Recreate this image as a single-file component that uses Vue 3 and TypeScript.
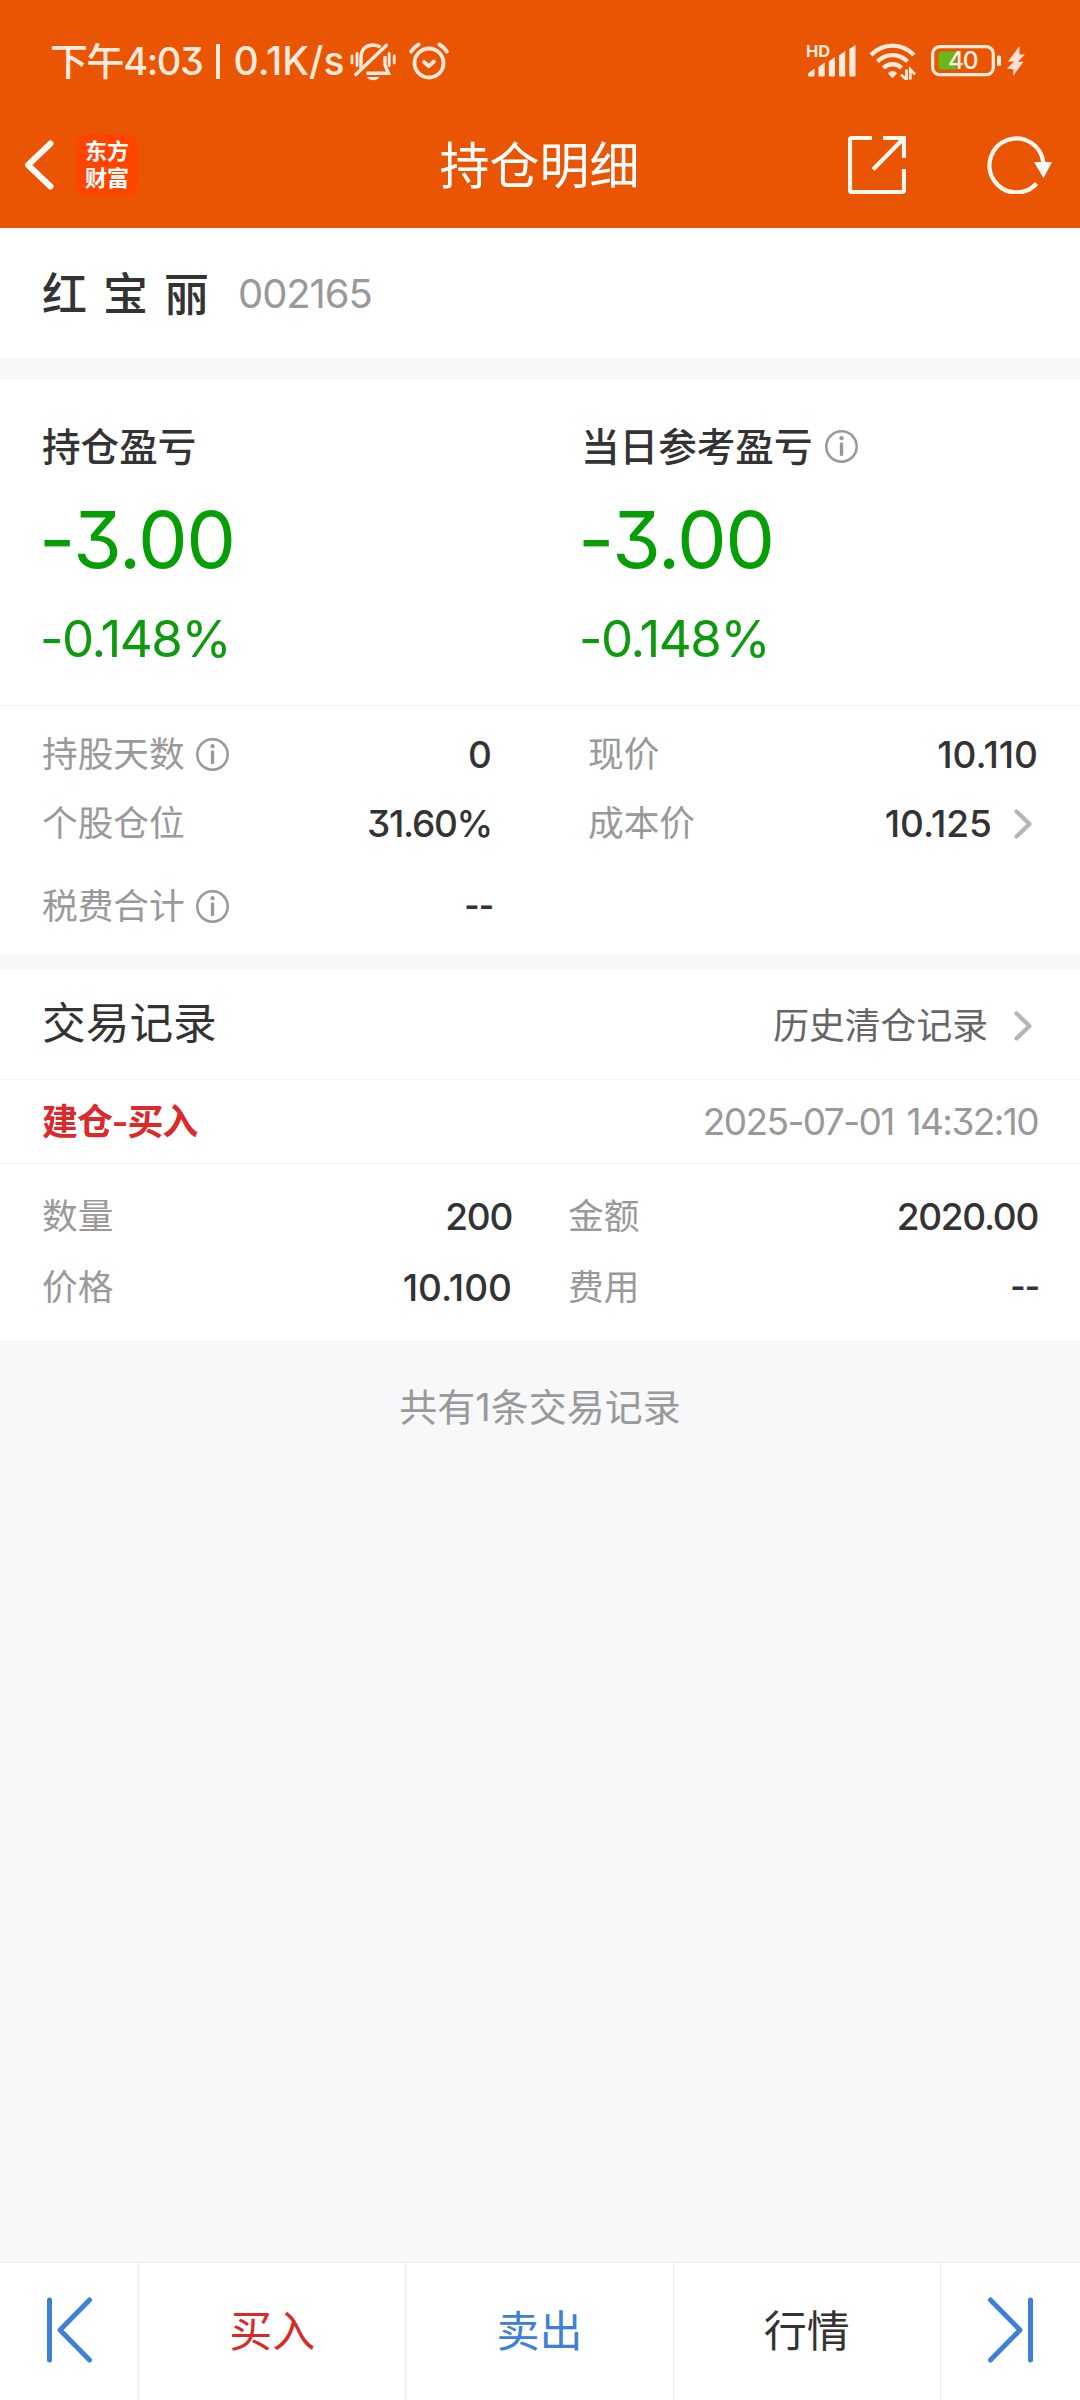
<script setup lang="ts">
interface Profit {
  label: string
  amount: string
  rate: string
  info: boolean
}

interface Field {
  label: string
  value: string
  info?: boolean
  link?: boolean
  tight?: boolean
}

const profits: Profit[] = [
  { label: '持仓盈亏', amount: '-3.00', rate: '-0.148%', info: false },
  { label: '当日参考盈亏', amount: '-3.00', rate: '-0.148%', info: true },
]

const leftFields: Field[] = [
  { label: '持股天数', value: '0', info: true },
  { label: '个股仓位', value: '31.60%', tight: true },
  { label: '税费合计', value: '--', info: true },
]

const rightFields: Field[] = [
  { label: '现价', value: '10.110' },
  { label: '成本价', value: '10.125', link: true },
]

const tradeLeft: Field[] = [
  { label: '数量', value: '200', tight: true },
  { label: '价格', value: '10.100' },
]

const tradeRight: Field[] = [
  { label: '金额', value: '2020.00', tight: true },
  { label: '费用', value: '--' },
]
</script>

<template>
  <div class="page">
    <header class="header">
      <div class="status">
        <div class="status-left">
          <span class="clock">下午4:03</span>
          <span class="bar"></span>
          <span class="speed">0.1K/s</span>
          <svg class="bell" width="46" height="40" viewBox="0 0 46 40" fill="none" stroke="#ffeadb" stroke-width="3.4">
            <path d="M11 27.500V16.500C11 8.500 16 4 23 4C26 4 28.500 4.800 30.500 6.200" />
            <path d="M35 15V24L38.500 32.300H16.500" />
            <path d="M5.800 33.500L36.500 4.300" stroke-linecap="round" />
            <path d="M2 15V22M7 12.500V24.500M39.200 12.500V24.500M44.200 15V22" stroke-width="2.800" stroke-linecap="round" />
            <path d="M17 36H29.500C28 38.300 26 39.300 23.200 39.300C20.500 39.300 18.500 38.300 17 36Z" fill="#ffeadb" stroke="none" />
          </svg>
          <svg class="alarm" width="40" height="38" viewBox="0 0 40 38" fill="none" stroke="#ffeadb" stroke-width="3.800" stroke-linecap="round" stroke-linejoin="round">
            <circle cx="20" cy="21" r="14.500" />
            <path d="M2.200 9.500C4 6.500 6.400 4.300 9.600 2.500M37.800 9.500C36 6.500 33.600 4.300 30.400 2.500" />
            <path d="M15 20L19.600 24.200L25 19.500" />
          </svg>
        </div>
        <div class="status-right">
          <div class="signal">
            <span class="hd">HD</span>
            <svg width="50" height="36" viewBox="0 0 50 36" fill="#ffeadb">
              <path d="M1 30.500L7.500 25.500V32.500Q7.500 33.500 6.500 33.500H2Q1 33.500 1 32.500Z" />
              <path d="M11.500 24L17.700 19.500V32.500Q17.700 33.500 16.700 33.500H12.500Q11.500 33.500 11.500 32.500Z" />
              <path d="M21.800 18.500L28 14V32.500Q28 33.500 27 33.500H22.800Q21.800 33.500 21.800 32.500Z" />
              <path d="M32 12.500L38.200 8V32.500Q38.200 33.500 37.200 33.500H33Q32 33.500 32 32.500Z" />
              <path d="M42.300 6L48.500 2V32.500Q48.500 33.500 47.500 33.500H43.300Q42.300 33.500 42.300 32.500Z" />
            </svg>
          </div>
          <svg class="wifi" width="48" height="38" viewBox="0 0 48 38" fill="none" stroke="#ffeadb" stroke-width="4.400">
            <path d="M2 13C14.500 0.500 32.500 0.500 45 13" />
            <path d="M8.500 19.500C17 11 30 11 38.500 19.500" />
            <path d="M14.500 26C19.500 20.900 27.500 20.900 32.500 26" />
            <path d="M18.800 31.200Q23.500 27 28.200 31.200L23.500 36.200Z" fill="#ffeadb" stroke="none" />
            <path d="M37.500 27.500V37.500L32 32.800M41.300 37.500V27.500L46 32.400" stroke-width="2.800" />
          </svg>
          <svg class="battery" width="72" height="32" viewBox="0 0 72 32">
            <rect x="1.700" y="1.700" width="60.600" height="28" rx="7" fill="none" stroke="#ffeadb" stroke-width="3.200" />
            <rect x="66" y="10.500" width="4" height="10.500" rx="1.500" fill="#ffeadb" />
            <path d="M10 6.500H25V24.500H10Q7.500 24.500 7.500 22V9Q7.500 6.500 10 6.500Z" fill="#68b81a" />
            <text x="31.500" y="24.400" text-anchor="middle" class="level">40</text>
          </svg>
          <svg class="bolt" width="18" height="32" viewBox="0 0 18 32" fill="#ffe0d2">
            <path d="M12.500 1L1 16.500H7L0 23.500L6.500 24.500L6 31L16.500 16.800H11L18 9.500H12.500Z" />
          </svg>
        </div>
      </div>

      <div class="nav">
        <div class="nav-side">
          <svg width="30" height="50" viewBox="0 0 30 50" fill="none" stroke="#fffaf5" stroke-width="6" stroke-linecap="round" stroke-linejoin="round">
            <path d="M26.500 3.500L4 25L26.500 46.500" />
          </svg>
          <div class="logo"><span>东方</span><span>财富</span></div>
        </div>
        <h1 class="nav-title">持仓明细</h1>
        <div class="nav-side nav-end">
          <svg class="share" width="58" height="58" viewBox="0 0 58 58" fill="none" stroke="#fff6ee" stroke-width="4.200">
            <path d="M24 2H4Q2 2 2 4V54Q2 56 4 56H54Q56 56 56 54V33" />
            <path d="M35 2H56V22M55.500 2.500L25 33.500" />
          </svg>
          <svg class="reload" width="66" height="58" viewBox="0 0 66 58" fill="none" stroke="#fff6ee" stroke-width="4.200">
            <path d="M49.600 47.500A27 27 0 1 1 56.400 27" />
            <path d="M47 26H65L56.500 42Z" fill="#fff" stroke="none" />
          </svg>
        </div>
      </div>
    </header>

    <section class="stock">
      <span class="stock-name">红 宝 丽</span>
      <span class="stock-code">002165</span>
    </section>

    <section class="card holding">
      <div class="profits">
        <div v-for="p in profits" :key="p.label" class="profit">
          <div class="profit-label">
            <span>{{ p.label }}</span>
            <svg v-if="p.info" class="info" width="33" height="33" viewBox="0 0 33 33" fill="none" stroke="#999">
              <circle cx="16.500" cy="16.500" r="15.200" stroke-width="2.500" />
              <circle cx="16.500" cy="8.200" r="2.100" fill="#999" stroke="none" />
              <path d="M16.500 14V24.500" stroke-width="3.400" stroke-linecap="round" />
            </svg>
          </div>
          <div class="profit-amount">{{ p.amount }}</div>
          <div class="profit-rate">{{ p.rate }}</div>
        </div>
      </div>
      <div class="fields">
        <div v-for="(col, i) in [leftFields, rightFields]" :key="i" class="field-col">
          <div v-for="f in col" :key="f.label" class="field">
            <span class="field-label">{{ f.label }}</span>
            <svg v-if="f.info" class="info" width="33" height="33" viewBox="0 0 33 33" fill="none" stroke="#999">
              <circle cx="16.500" cy="16.500" r="15.200" stroke-width="2.500" />
              <circle cx="16.500" cy="8.200" r="2.100" fill="#999" stroke="none" />
              <path d="M16.500 14V24.500" stroke-width="3.400" stroke-linecap="round" />
            </svg>
            <span class="field-value" :class="{ dash: f.value === '--', tight: f.tight }">{{ f.value }}</span>
            <svg v-if="f.link" class="chevron" width="18" height="30" viewBox="0 0 18 30" fill="none" stroke="#b5b5b5" stroke-width="4.200" stroke-linecap="round" stroke-linejoin="round">
              <path d="M2.500 2.500L15.500 15L2.500 27.500" />
            </svg>
          </div>
        </div>
      </div>
    </section>

    <section class="card trades">
      <div class="trades-head">
        <h2>交易记录</h2>
        <a class="history">
          历史清仓记录
          <svg class="chevron" width="18" height="30" viewBox="0 0 18 30" fill="none" stroke="#b5b5b5" stroke-width="4.200" stroke-linecap="round" stroke-linejoin="round">
            <path d="M2.500 2.500L15.500 15L2.500 27.500" />
          </svg>
        </a>
      </div>
      <div class="trade-head">
        <span class="trade-type">建仓-买入</span>
        <time class="trade-time">2025-07-01 14:32:10</time>
      </div>
      <div class="trade-body">
        <div v-for="(col, i) in [tradeLeft, tradeRight]" :key="i" class="field-col">
          <div v-for="f in col" :key="f.label" class="field">
            <span class="field-label">{{ f.label }}</span>
            <span class="field-value" :class="{ dash: f.value === '--', tight: f.tight }">{{ f.value }}</span>
          </div>
        </div>
      </div>
    </section>

    <p class="summary">共有1条交易记录</p>

    <footer class="tabs">
      <button class="tab edge">
        <svg width="48" height="68" viewBox="0 0 48 68" fill="none" stroke="#3d80d6" stroke-width="5" stroke-linecap="round" stroke-linejoin="round">
          <path d="M4.500 4V64M44.500 4L15 34L44.500 64" />
        </svg>
      </button>
      <button class="tab buy">买入</button>
      <button class="tab sell">卖出</button>
      <button class="tab">行情</button>
      <button class="tab edge">
        <svg width="48" height="68" viewBox="0 0 48 68" fill="none" stroke="#3d80d6" stroke-width="5" stroke-linecap="round" stroke-linejoin="round">
          <path d="M44.500 4V64M4.500 4L34 34L4.500 64" />
        </svg>
      </button>
    </footer>
  </div>
</template>

<style>
body {
  margin: 0;
  background: #f6f8fa;
}
</style>

<style scoped>
.page {
  display: flex;
  flex-direction: column;
  width: 1080px;
  height: 2400px;
  overflow: hidden;
  background: #f6f8fa;
  color: #333;
  font-family: Inter, "Noto Sans CJK SC", sans-serif;
  font-feature-settings: "cv09";
  line-height: 1;
  white-space: nowrap;
}

svg {
  display: block;
  flex: none;
}

h1,
h2,
p {
  margin: 0;
  font-weight: 400;
}

.header {
  height: 228px;
  background: #ea5504;
}

/* status bar */
.status {
  display: flex;
  justify-content: space-between;
  height: 102px;
  padding: 20px 55px 0 50px;
  box-sizing: border-box;
  color: #ffeadb;
}

.status-left,
.status-right {
  display: flex;
  align-items: center;
  height: 82px;
}

.clock,
.speed {
  line-height: 82px;
  font-weight: 500;
}

.clock {
  font-size: 38px;
  letter-spacing: -1.4px;
}

.speed {
  font-size: 39px;
}

.bar {
  width: 4px;
  height: 35px;
  margin: 0 14px 0 13px;
  background: #ffeadb;
}

.bell {
  margin-left: 6px;
}

.alarm {
  margin-left: 13px;
}

.signal {
  position: relative;
}

.hd {
  position: absolute;
  left: -1px;
  top: 0;
  font-size: 16.5px;
  line-height: 16px;
  font-weight: 700;
}

.wifi {
  margin-left: 12px;
}

.battery {
  margin-left: 14px;
}

.level {
  fill: #fff6ea;
  font-size: 24.500px;
  font-weight: 500;
  letter-spacing: -1.5px;
}

.bolt {
  margin-left: 4px;
}

/* navigation bar */
.nav {
  display: flex;
  align-items: center;
  height: 126px;
  padding: 0 27px 0 24px;
}

.nav-side {
  display: flex;
  flex: 1;
  align-items: center;
}

.nav-end {
  justify-content: flex-end;
}

.logo {
  display: flex;
  flex-direction: column;
  justify-content: center;
  width: 62px;
  height: 62px;
  margin-left: 22px;
  border-radius: 13px;
  background: #ff4400;
  color: #fff;
  font-size: 22px;
  font-weight: 700;
  line-height: 27px;
  text-align: center;
}

.nav-title {
  padding: 2px 0 0 2px;
  color: #fff;
  font-size: 50px;
  line-height: 124px;
}

.reload {
  margin-left: 81px;
}

/* stock name */
.stock {
  display: flex;
  align-items: center;
  height: 130px;
  padding: 1px 42px 0;
  box-sizing: border-box;
  background: #fff;
}

.stock-name {
  padding-top: 1px;
  font-size: 45px;
  font-weight: 500;
  word-spacing: 4px;
}

.stock-code {
  margin-left: 29px;
  color: #999;
  font-size: 40px;
  letter-spacing: -1.1px;
}

.card {
  background: #fff;
}

/* holding */
.holding {
  margin-top: 22px;
  height: 575px;
}

.profits {
  display: flex;
  height: 326px;
  padding-left: 42px;
  box-sizing: border-box;
  border-bottom: 1px solid #f5f5f5;
}

.profit {
  flex: none;
  width: 539px;
  padding-top: 46px;
}

.profit-label {
  display: flex;
  align-items: center;
  gap: 13px;
  height: 40px;
  font-size: 38.600px;
  font-weight: 500;
}

.profit-label span {
  padding-top: 2px;
}

.profit-amount {
  margin: 33px 0 0 -3px;
  color: #059f05;
  font-size: 79px;
  line-height: 80px;
  letter-spacing: -1.5px;
}

.profit-rate {
  margin: 34px 0 0 -2px;
  color: #0e9a0e;
  font-size: 51px;
  line-height: 52px;
  letter-spacing: -1.4px;
}

.fields {
  display: flex;
  justify-content: space-between;
  padding: 14px 42px 0;
}

.field-col {
  width: 450px;
}

.field {
  display: flex;
  align-items: center;
  height: 69px;
}

.fields .field:nth-child(3) {
  height: 97px;
}

.field-label {
  color: #999;
  font-size: 35.7px;
}

.field .info {
  margin-left: 11px;
}

.field-value {
  margin-left: auto;
  font-size: 37px;
  font-weight: 500;
}

.field-value.tight {
  letter-spacing: -1.3px;
}

.field-value.dash {
  padding-bottom: 3px;
  font-size: 33px;
  font-weight: 600;
  letter-spacing: -1px;
  margin-right: -1px;
}

.field .chevron {
  margin: 0 6px 0 22px;
}

/* trades */
.trades {
  margin-top: 14px;
  height: 371px;
}

.trades-head {
  display: flex;
  align-items: center;
  justify-content: space-between;
  height: 110px;
  padding: 0 48px 0 42px;
  border-bottom: 1px solid #f5f5f5;
}

.trades-head h2 {
  padding-bottom: 1px;
  font-size: 43.7px;
}

.history {
  display: flex;
  align-items: center;
  gap: 26px;
  padding-top: 5px;
  color: #666;
  font-size: 35.8px;
}

.trade-head {
  display: flex;
  align-items: center;
  justify-content: space-between;
  height: 83px;
  padding: 0 42px;
  border-bottom: 1px solid #f5f5f5;
}

.trade-type {
  color: #d92b2b;
  font-size: 36px;
  font-weight: 600;
  letter-spacing: -1.1px;
}

.trade-time {
  color: #999;
  font-size: 37px;
  letter-spacing: -1.6px;
  word-spacing: 4px;
}

.trade-body {
  display: flex;
  justify-content: space-between;
  padding: 17px 42px 0;
}

.trade-body .field-col {
  width: 470px;
}

.trade-body .field {
  height: 71px;
}

.summary {
  color: #999;
  font-size: 38px;
  line-height: 134px;
  text-align: center;
}

/* bottom bar */
.tabs {
  display: flex;
  height: 137px;
  margin-top: auto;
  border-top: 1px solid #ebebeb;
  background: #fff;
}

.tab {
  display: flex;
  flex: 1;
  align-items: center;
  justify-content: center;
  padding: 0;
  border: 0;
  border-right: 1px solid #ebebeb;
  background: none;
  color: #333;
  font: inherit;
  font-size: 43px;
}

.tab:last-child {
  border-right: 0;
}

.tab.edge {
  flex: 0 0 139px;
  padding-bottom: 4px;
}

.tab.buy {
  color: #d52b2b;
}

.tab.sell {
  color: #3d80d6;
}
</style>
